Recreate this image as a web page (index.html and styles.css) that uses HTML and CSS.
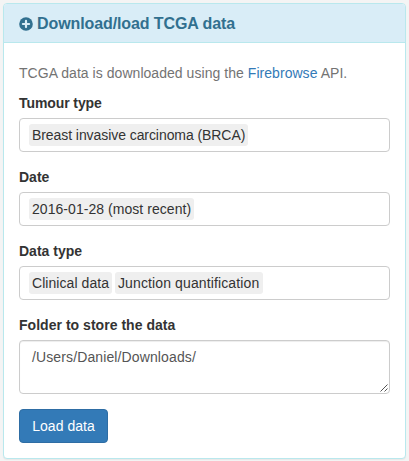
FILE: index.html
```html
<!DOCTYPE html>
<html lang="en">
<head>
<meta charset="utf-8">
<title>Download/load TCGA data</title>
<link rel="stylesheet" href="styles.css">
</head>
<body>
<section class="panel">
  <header class="panel-heading">
    <svg class="icon" viewBox="0 0 14 14" aria-hidden="true"><circle cx="7" cy="7" r="6.8" fill="currentColor"/><path d="M7 3.9v6.2M3.9 7h6.2" stroke="#d9edf7" stroke-width="2.2" stroke-linecap="round"/></svg>
    <h4 class="title">Download/load TCGA data</h4>
  </header>
  <form class="panel-body">
    <p class="help">TCGA data is downloaded using the <a href="#">Firebrowse</a> API.</p>
    <div class="group">
      <label class="label-tumour">Tumour type</label>
      <div class="control select"><span class="item item-tumour">Breast invasive carcinoma (BRCA)</span></div>
    </div>
    <div class="group">
      <label>Date</label>
      <div class="control select"><span class="item item-date">2016-01-28 (most recent)</span></div>
    </div>
    <div class="group">
      <label>Data type</label>
      <div class="control select"><span class="item item-clinical">Clinical data</span><span class="item item-junction">Junction quantification</span></div>
    </div>
    <div class="group">
      <label class="label-folder">Folder to store the data</label>
      <div class="control folder">/Users/Daniel/Downloads/
        <svg class="grip" viewBox="0 0 8 8" aria-hidden="true"><path d="M.5 7.5l7-7M4.5 7.5l3-3" stroke="#555" fill="none"/></svg>
      </div>
    </div>
    <button class="btn" type="button">Load data</button>
  </form>
</section>
</body>
</html>
```
FILE: styles.css
```css
* { box-sizing: border-box; }
body {
  margin: 0;
  padding: 3px;
  background: #f4f4f4;
  color: #333;
  font: 14px/20px "Liberation Sans", Arial, sans-serif;
}
.panel {
  height: 456px;
  border: 1px solid #b9e8ed;
  border-radius: 4px;
  background: #fff;
  box-shadow: 0 1px 1px rgba(0, 0, 0, .05);
}
.panel-heading {
  display: flex;
  align-items: center;
  gap: 4px;
  height: 39px;
  padding: 2px 15px 0;
  border-bottom: 1px solid #b9e8ed;
  border-radius: 3px 3px 0 0;
  background: #d9edf7;
  color: #31708f;
}
.icon { width: 14px; height: 14px; }
.title { margin: 0; font-size: 16px; line-height: 18px; font-weight: bold; letter-spacing: -.1px; }
.panel-body { padding: 15px; }
.help { margin: 5px 0 10px; color: #737373; letter-spacing: .045px; }
.help a { color: #337ab7; text-decoration: none; }
.group { margin-bottom: 15px; }
label { display: block; margin-bottom: 5px; font-weight: bold; }
.label-tumour { letter-spacing: -.09px; }
.label-folder { letter-spacing: .03px; }
.control {
  width: 371px;
  border: 1px solid #ccc;
  border-radius: 4px;
}
.select { display: flex; gap: 3px; height: 34px; padding: 5px 9px; }
.item {
  height: 22px;
  padding: 1px 3px;
  border-radius: 3px;
  background: #efefef;
  white-space: nowrap;
}
.item-tumour { width: 219px; letter-spacing: -.07px; }
.item-date { width: 165px; letter-spacing: .05px; }
.item-clinical { width: 83px; letter-spacing: .06px; }
.item-junction { width: 148px; letter-spacing: .12px; }
.folder {
  position: relative;
  height: 54px;
  padding: 6px 12px;
  color: #555;
  letter-spacing: .12px;
  box-shadow: inset 0 1px 1px rgba(0, 0, 0, .075);
}
.grip { position: absolute; right: 1px; bottom: 1px; width: 8px; height: 8px; }
.btn {
  display: block;
  width: 89px;
  height: 34px;
  padding: 0;
  border: 1px solid #2e6da4;
  border-radius: 4px;
  background: #337ab7;
  color: #fff;
  font: inherit;
  letter-spacing: .05px;
}
```
